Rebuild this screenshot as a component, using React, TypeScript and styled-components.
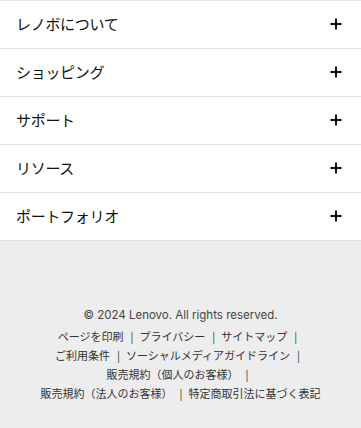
import React from "react";
import styled, { createGlobalStyle } from "styled-components";

const Global = createGlobalStyle`
  html, body { margin: 0; padding: 0; background: #ededed; }
  body { font-family: "Noto Sans CJK JP", "Noto Sans", sans-serif; }
`;

const Page = styled.div`
  display: flex;
  flex-direction: column;
  min-height: 428px;
  background: #ededed;
`;

const Menu = styled.ul`
  list-style: none;
  margin: 0;
  padding: 0;
  background: #fff;
  border-top: 1px solid #e6e6e6;
`;

const Row = styled.li`
  display: flex;
  align-items: center;
  justify-content: space-between;
  height: 48px;
  padding: 0 19px 2px 16px;
  box-sizing: border-box;
  border-bottom: 1px solid #e2e2e2;
  font-size: 15px;
  color: #111;
`;

const Label = styled.span`
  letter-spacing: -0.3px;
`;

const Plus = () => (
  <svg width="12" height="12" viewBox="0 0 12 12" aria-hidden="true">
    <path d="M6 0.5V11.5M0.5 6H11.5" stroke="#111" strokeWidth="2" />
  </svg>
);

const Footer = styled.footer`
  padding: 66px 35px 20px;
  text-align: center;
  color: #333;
`;

const Copyright = styled.p`
  margin: 0 0 4px;
  font-family: Inter, "Noto Sans", sans-serif;
  font-size: 11.5px;
  line-height: 16px;
  color: #444;
`;

const Links = styled.div`
  font-size: 11px;
  line-height: 19px;
`;

const Item = styled.span`
  display: inline-block;
  white-space: nowrap;
`;

const Sep = styled.span`
  margin: 0 6px 0 7px;
`;

const items = [
  "ページを印刷",
  "プライバシー",
  "サイトマップ",
  "ご利用条件",
  "ソーシャルメディアガイドライン",
  "販売規約（個人のお客様）",
  "販売規約（法人のお客様）",
  "特定商取引法に基づく表記",
];

export default function App() {
  const menu = ["レノボについて", "ショッピング", "サポート", "リソース", "ポートフォリオ"];
  return (
    <Page>
      <Global />
      <Menu>
        {menu.map((m) => (
          <Row key={m}>
            <Label>{m}</Label>
            <Plus />
          </Row>
        ))}
      </Menu>
      <Footer>
        <Copyright>© 2024 Lenovo. All rights reserved.</Copyright>
        <Links>
          {items.map((it, i) => (
            <Item key={it}>
              {it}
              {i < items.length - 1 && <Sep>|</Sep>}
            </Item>
          ))}
        </Links>
      </Footer>
    </Page>
  );
}
